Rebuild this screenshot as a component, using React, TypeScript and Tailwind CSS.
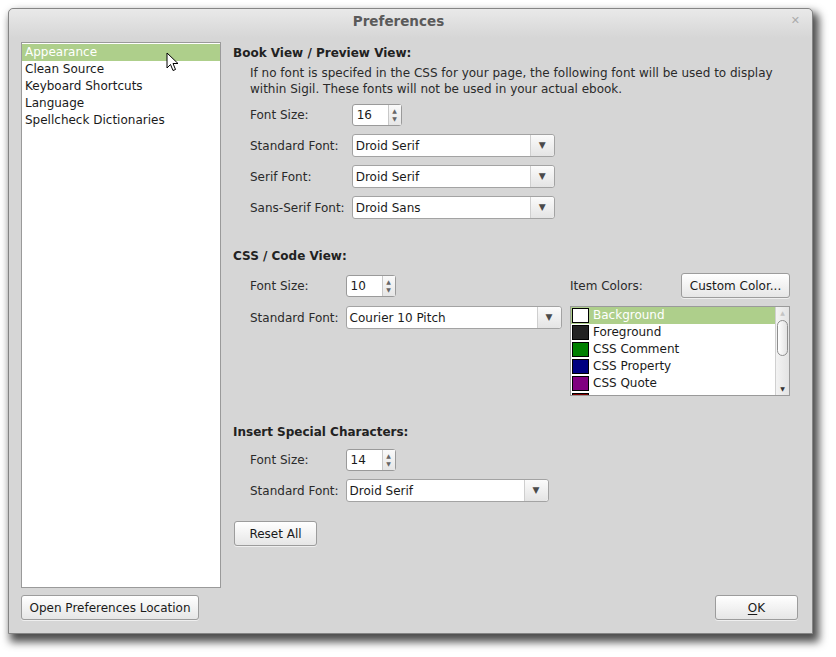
import React from "react";

const sans = { fontFamily: '"DejaVu Sans", "Liberation Sans", sans-serif' };

function SpinBox({ value }: { value: string }) {
  return (
    <div className="flex h-[22px] w-[50px] rounded-[3px] border border-[#9a9a9a] bg-white">
      <div className="flex flex-1 items-center pl-[4px] text-[12px] text-[#1a1a1a]">{value}</div>
      <div className="flex w-[13px] flex-col items-center justify-between border-l border-[#c8c8c8] bg-gradient-to-b from-[#fafafa] to-[#e6e6e6] py-[2px] text-[6px] leading-[8px] text-[#666]">
        <span>▲</span>
        <span>▼</span>
      </div>
    </div>
  );
}

function Combo({ value, width }: { value: string; width: string }) {
  return (
    <div className={`flex h-[23px] ${width} rounded-[3px] border border-[#a3a3a3] bg-white`}>
      <div className="flex flex-1 items-center pl-[3px] text-[12px] text-[#1a1a1a]">{value}</div>
      <div className="flex w-[24px] items-center justify-center rounded-r-[3px] border-l border-[#cfcfcf] bg-gradient-to-b from-[#fbfbfb] to-[#e4e4e4] text-[9px] text-[#4a4a4a]">
        ▼
      </div>
    </div>
  );
}

function Button({ children, className = "" }: { children: React.ReactNode; className?: string }) {
  return (
    <div
      className={`flex h-[25px] items-center justify-center rounded-[3px] border border-[#9c9c9c] bg-gradient-to-b from-[#ffffff] to-[#e6e6e6] text-[12px] text-[#1a1a1a] shadow-[0_1px_0_rgba(255,255,255,0.6)] ${className}`}
    >
      {children}
    </div>
  );
}

const label = "text-[12px] text-[#2a2a2a]";

const colorItems = [
  { name: "Background", color: "#ffffff" },
  { name: "Foreground", color: "#222222" },
  { name: "CSS Comment", color: "#008000" },
  { name: "CSS Property", color: "#000080" },
  { name: "CSS Quote", color: "#800080" },
  { name: "", color: "#800000" },
];

export default function App() {
  return (
    <div className="relative h-[657px] w-[836px] overflow-hidden bg-white pl-[8px] pt-[8px]" style={sans}>
      <div className="flex h-[626px] w-[805px] flex-col rounded-t-[5px] border border-[#858585] bg-[#d6d6d6] shadow-[4px_6px_9px_2px_rgba(0,0,0,0.7)]">
        {/* title bar */}
        <div className="grid h-[29px] grid-cols-[1fr_auto_1fr] items-start rounded-t-[5px] bg-gradient-to-b from-[#e9e9e9] to-[#d6d6d6] pt-[2px]">
          <div />
          <div className="mr-[24px] text-[13.5px] font-bold text-[#5a5a5a]">Preferences</div>
          <div className="flex justify-end pr-[12px] pt-[2px] text-[11px] font-bold text-[#ababab]">✕</div>
        </div>

        <div className="flex flex-1 flex-col pb-[13px] pl-[12px] pr-[14px] pt-[4px]">
          <div className="flex flex-1 gap-[12px]">
            {/* category list */}
            <div className="w-[200px] border border-[#9a9a9a] bg-white pt-[1px] text-[12px] leading-[17px] text-[#1a1a1a]">
              <div className="bg-[#aecf8b] pl-[3px] text-white">Appearance</div>
              <div className="pl-[3px]">Clean Source</div>
              <div className="pl-[3px]">Keyboard Shortcuts</div>
              <div className="pl-[3px]">Language</div>
              <div className="pl-[3px]">Spellcheck Dictionaries</div>
            </div>

            {/* settings panel */}
            <div className="flex flex-1 flex-col pt-[3px] text-[#1a1a1a]">
              <div className="text-[12px] font-bold leading-[16px] text-[#222]">Book View / Preview View:</div>
              <div className="mt-[4px] pl-[17px] text-[12px] leading-[16px] text-[#2a2a2a]">
                If no font is specifed in the CSS for your page, the following font will be used to display
                <br />
                within Sigil. These fonts will not be used in your actual ebook.
              </div>
              <div className="mt-[7px] grid grid-cols-[auto_auto] items-center justify-start gap-x-[7px] gap-y-[8px] pl-[17px]">
                <div className={label}>Font Size:</div>
                <SpinBox value="16" />
                <div className={label}>Standard Font:</div>
                <Combo value="Droid Serif" width="w-[203px]" />
                <div className={label}>Serif Font:</div>
                <Combo value="Droid Serif" width="w-[203px]" />
                <div className={label}>Sans-Serif Font:</div>
                <Combo value="Droid Sans" width="w-[203px]" />
              </div>

              <div className="mt-[29px] text-[12px] font-bold leading-[16px] text-[#222]">CSS / Code View:</div>
              <div className="mt-[9px] flex pr-[8px]">
                <div className="mt-[2px] grid grid-cols-[auto_auto] content-start items-center justify-start gap-x-[7px] gap-y-[9px] pl-[17px]">
                  <div className={label}>Font Size:</div>
                  <SpinBox value="10" />
                  <div className={label}>Standard Font:</div>
                  <Combo value="Courier 10 Pitch" width="w-[216px]" />
                </div>
                <div className="ml-auto flex w-[220px] flex-col">
                  <div className="flex items-center justify-between">
                    <span className={label}>Item Colors:</span>
                    <Button className="h-[24px] w-[109px]">Custom Color...</Button>
                  </div>
                  <div className="mt-[8px] flex h-[90px] border border-[#9a9a9a] bg-white">
                    <div className="flex-1 overflow-hidden text-[12px] leading-[17px] text-[#1a1a1a]">
                      {colorItems.map((it, i) => (
                        <div
                          key={i}
                          className={`flex h-[17px] items-center gap-[4px] pl-[1px] ${i === 0 ? "bg-[#aecf8b] text-white" : ""}`}
                        >
                          <span
                            className="h-[15px] w-[17px] shrink-0 border border-black"
                            style={{ backgroundColor: it.color }}
                          />
                          {it.name && <span>{it.name}</span>}
                        </div>
                      ))}
                    </div>
                    <div className="flex w-[14px] flex-col items-center border-l border-[#d0d0d0] bg-gradient-to-r from-[#f3f3f3] to-[#e3e3e3]">
                      <span className="mt-[2px] text-[6px] leading-[8px] text-[#c4c4c4]">▲</span>
                      <div className="mt-[3px] h-[36px] w-[11px] rounded-full border border-[#8e8e8e] bg-gradient-to-r from-[#ffffff] to-[#e2e2e2]" />
                      <span className="mb-[2px] mt-auto text-[6px] leading-[8px] text-[#333]">▼</span>
                    </div>
                  </div>
                </div>
              </div>

              <div className="mt-[28px] text-[12px] font-bold leading-[16px] text-[#222]">Insert Special Characters:</div>
              <div className="mt-[9px] grid grid-cols-[auto_auto] items-center justify-start gap-x-[7px] gap-y-[8px] pl-[17px]">
                <div className={label}>Font Size:</div>
                <SpinBox value="14" />
                <div className={label}>Standard Font:</div>
                <Combo value="Droid Serif" width="w-[203px]" />
              </div>
              <div className="mt-[19px] pl-[1px]">
                <Button className="h-[24px] w-[83px]">Reset All</Button>
              </div>
            </div>
          </div>

          {/* bottom buttons */}
          <div className="mt-[7px] flex items-center justify-between">
            <Button className="w-[178px]">Open Preferences Location</Button>
            <Button className="w-[83px] bg-gradient-to-b from-[#ffffff] to-[#dde6d2]">
              <span className="underline underline-offset-2">O</span>K
            </Button>
          </div>
        </div>
      </div>

      {/* mouse pointer */}
      <svg className="absolute left-[166px] top-[52px]" width="13" height="20" viewBox="0 0 13 20">
        <path
          d="M1 1 L1 16 L4.5 12.5 L7 18.5 L9.5 17.5 L7 11.5 L12 11.5 Z"
          fill="white"
          stroke="black"
          strokeWidth="1"
          strokeLinejoin="round"
        />
      </svg>
    </div>
  );
}
